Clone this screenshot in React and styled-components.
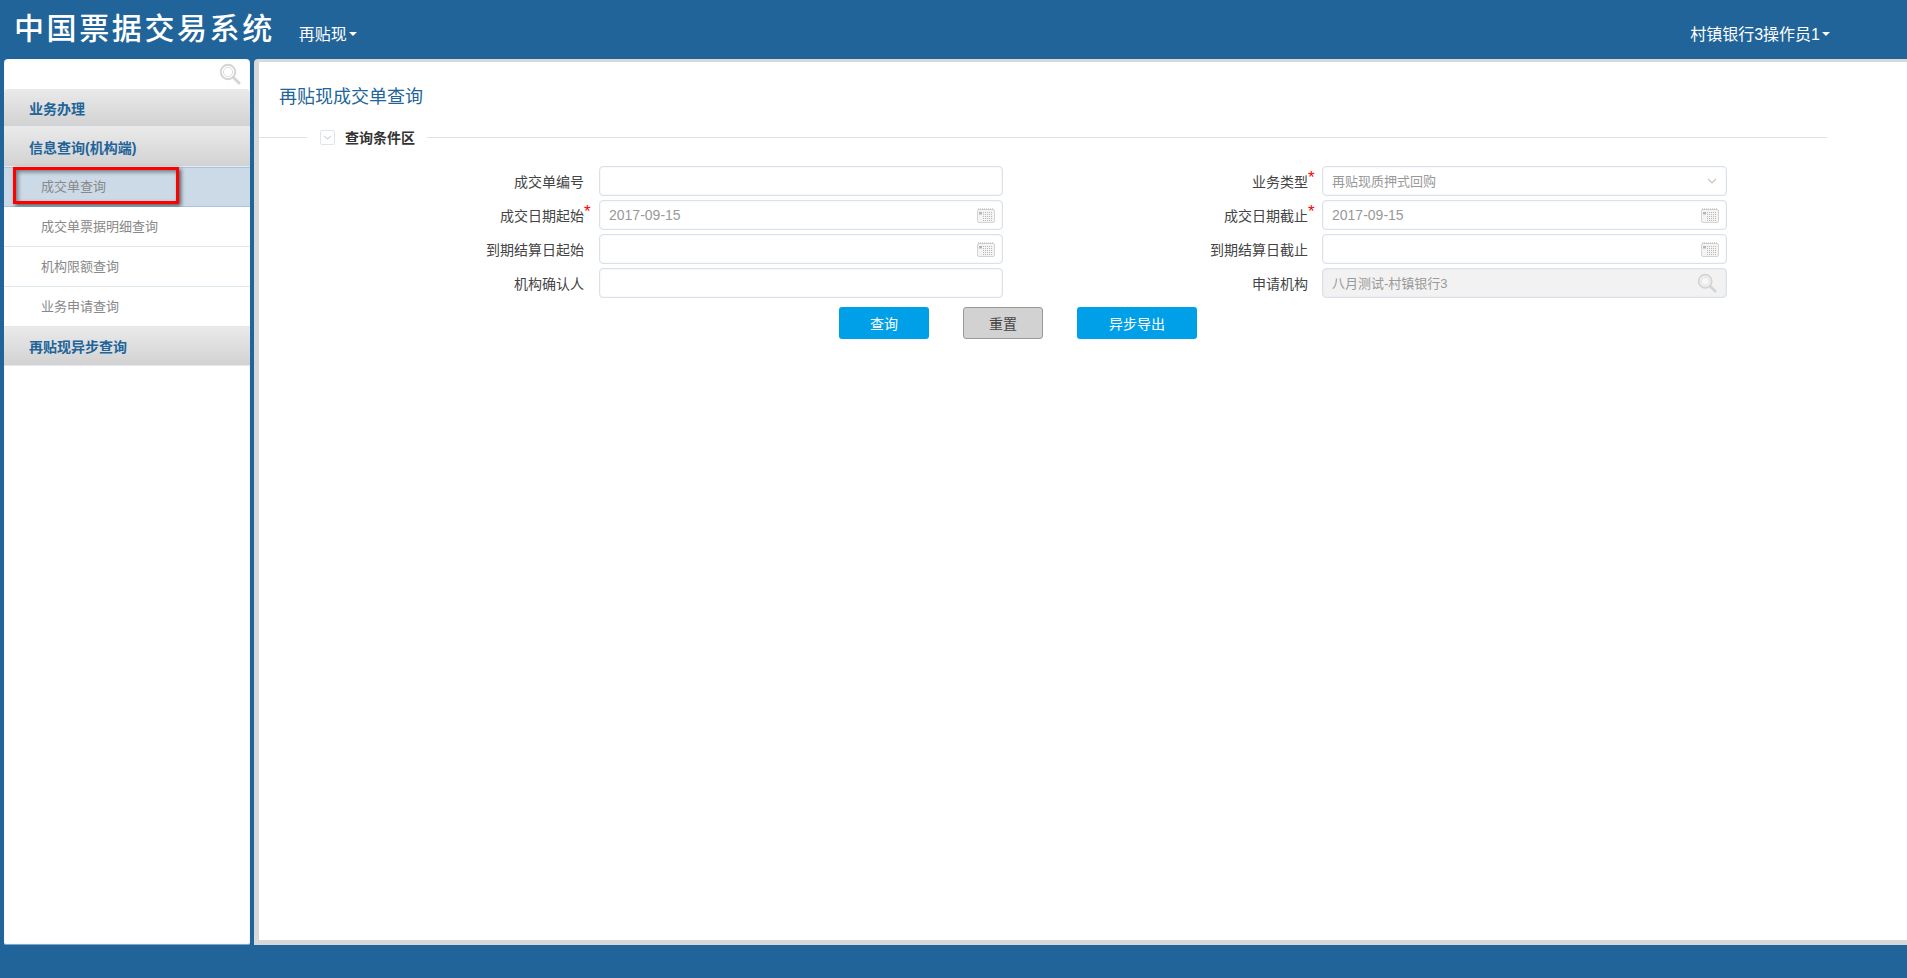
import React from "react";
import styled, { createGlobalStyle } from "styled-components";

const FONT = `"Liberation Sans", "Noto Sans CJK SC", sans-serif`;
const BLUE = "#216499";

const Global = createGlobalStyle`
  html, body { margin: 0; padding: 0; height: 100%; background: ${BLUE}; overflow: hidden; }
  * { box-sizing: border-box; }
`;

const Page = styled.div`
  width: 1907px;
  height: 978px;
  display: flex;
  flex-direction: column;
  background: ${BLUE};
  font-family: ${FONT};
`;

const Header = styled.header`
  height: 59px;
  flex: none;
  display: flex;
  align-items: center;
  padding: 0 77px 0 14px;
  color: #fff;
`;

const Logo = styled.div`
  font-size: 30px;
  line-height: 59px;
  font-weight: 500;
  letter-spacing: 2.6px;
  margin-top: -3px;
  white-space: nowrap;
`;

const NavLink = styled.div`
  display: flex;
  align-items: center;
  font-size: 16px;
  margin-top: ${(p) => p.$top}px;
  white-space: nowrap;
  margin-left: ${(p) => p.$left || 0}px;
`;

const Caret = styled.span`
  display: inline-block;
  width: 0;
  height: 0;
  margin-left: 2px;
  margin-top: 2px;
  border-left: 4px solid transparent;
  border-right: 4px solid transparent;
  border-top: 4px solid #fff;
`;

const Spacer = styled.div`
  flex: 1;
`;

const Body = styled.div`
  flex: none;
  height: 886px;
  display: flex;
  gap: 4px;
  padding-left: 4px;
`;

const Sidebar = styled.aside`
  width: 246px;
  flex: none;
  background: #fff;
  border-radius: 4px 4px 2px 2px;
  border-bottom: 1px solid #7fa6c6;
  box-shadow: inset 0 0 2px rgba(0, 0, 0, 0.12);
  display: flex;
  flex-direction: column;
`;

const SearchRow = styled.div`
  height: 30px;
  flex: none;
  display: flex;
  align-items: center;
  justify-content: flex-end;
  padding-right: 9px;
`;

const MenuHead = styled.div`
  height: ${(p) => p.$h}px;
  flex: none;
  display: flex;
  align-items: center;
  padding-left: 25px;
  font-size: 14px;
  font-weight: 700;
  color: ${BLUE};
  background: linear-gradient(#eaeaea, #d2d2d2);
  border-radius: ${(p) => (p.$first ? "4px 4px 0 0" : "0")};
  border-bottom: 1px solid #e4e9ef;
`;

const MenuItem = styled.div`
  position: relative;
  height: 40px;
  flex: none;
  display: flex;
  align-items: center;
  padding: 0 0 ${(p) => (p.$active ? 3 : 2)}px 37px;
  font-size: 13px;
  color: #888;
  background: ${(p) => (p.$active ? "#ccdae7" : "#fff")};
  border-top: ${(p) => (p.$active ? "1px solid #a9c4dd" : "none")};
  border-bottom: 1px solid ${(p) => (p.$active ? "#a9c4dd" : "#dfe7ef")};
`;

const Highlight = styled.div`
  position: absolute;
  left: 9px;
  top: -1px;
  width: 166px;
  height: 37px;
  border: 3px solid #f00;
  box-shadow: 2px 2px 4px rgba(0, 0, 0, 0.6), inset 2px 2px 4px rgba(0, 0, 0, 0.45);
`;

const Main = styled.main`
  flex: 1;
  background: #fff;
  border-style: solid;
  border-color: #d8d8d8;
  border-width: 3px 0 5px 5px;
  border-radius: 4px 0 0 0;
  display: flex;
  flex-direction: column;
`;

const PageTitle = styled.h1`
  margin: 0;
  padding: 23px 0 0 20px;
  font-size: 18px;
  line-height: 24px;
  font-weight: 400;
  color: ${BLUE};
`;

const Legend = styled.div`
  margin-top: 16px;
  width: 1568px;
  height: 24px;
  display: flex;
  align-items: center;
`;

const Rule = styled.div`
  height: 1px;
  background: #dfe1e6;
  flex: 1;
`;

const LegendStart = styled.div`
  width: 48px;
  height: 1px;
  flex: none;
  margin-right: 13px;
  background: #dfe1e6;
`;

const LegendText = styled.span`
  font-size: 14px;
  font-weight: 700;
  color: #333;
  margin: 0 12px 0 10px;
  white-space: nowrap;
`;

const FormGrid = styled.div`
  margin-top: 17px;
  display: grid;
  grid-template-columns: 340px 404px 319px 405px;
  grid-auto-rows: 30px;
  row-gap: 4px;
`;

const Label = styled.label`
  position: relative;
  align-self: center;
  justify-self: end;
  margin-right: ${(p) => (p.$right ? 14 : 15)}px;
  font-size: 14px;
  line-height: 18px;
  color: #444;
  margin-top: 1px;
  white-space: nowrap;
`;

const Star = styled.span`
  position: absolute;
  left: 100%;
  top: -3px;
  font-size: 17px;
  line-height: 16px;
  color: #f00;
`;

const Field = styled.div`
  height: 30px;
  display: flex;
  align-items: center;
  justify-content: space-between;
  padding: 0 ${(p) => (p.$wide ? 9 : 7)}px 0 9px;
  border: 1px solid #dbe1ea;
  border-radius: 4px;
  box-shadow: inset 0 0 2px rgba(180, 190, 205, 0.35);
  background: ${(p) => (p.$disabled ? "#f2f2f2" : "#fff")};
`;

const FieldText = styled.span`
  font-size: ${(p) => (p.$date ? 14 : 13)}px;
  margin-bottom: ${(p) => (p.$date ? 0 : 2)}px;
  color: #999;
  white-space: nowrap;
`;

const Actions = styled.div`
  margin-top: 9px;
  margin-left: 580px;
  display: flex;
`;

const Btn = styled.button`
  width: ${(p) => p.$w}px;
  height: 32px;
  margin-right: ${(p) => p.$mr || 0}px;
  padding: 0;
  border-radius: 3px;
  font-family: ${FONT};
  font-size: 14px;
  background: ${(p) => (p.$gray ? "#d2d2d2" : "#00a0e9")};
  color: ${(p) => (p.$gray ? "#444" : "#fff")};
  border: ${(p) => (p.$gray ? "1px solid #999" : "none")};
`;

const Footer = styled.footer`
  flex: 1;
  background: ${BLUE};
`;

const SearchIcon = ({ size = 22, color = "#d4d4d4" }) => (
  <svg width={size} height={size} viewBox="0 0 22 22" fill="none">
    <circle cx="9" cy="9" r="7.2" stroke={color} strokeWidth="2" fill="#fff" fillOpacity="0.4" />
    <circle cx="9" cy="9" r="4.6" stroke={color} strokeWidth="0.8" />
    <path d="M14.5 14.5L20 20" stroke={color} strokeWidth="3" strokeLinecap="round" />
  </svg>
);

const CalendarIcon = () => (
  <svg width="18" height="15" viewBox="0 0 18 15">
    <rect x="0.5" y="1.5" width="17" height="13" rx="1.5" fill="#f4f4f4" stroke="#d4d4d4" />
    <path d="M1 1h16" stroke="#b5b5b5" strokeDasharray="1 1" />
    <rect x="2" y="4" width="3" height="2.5" fill="#b5b5b5" />
    <path d="M6 4.5h10M6 6.5h10M6 8.5h10M6 10.5h10M6 12.5h10" stroke="#b8b8b8" strokeDasharray="1 1" />
  </svg>
);

const ChevronIcon = () => (
  <svg width="10" height="6" viewBox="0 0 10 6" fill="none">
    <path d="M1 1l4 4 4-4" stroke="#c4c4c4" strokeWidth="1.2" />
  </svg>
);

const CheckIcon = () => (
  <svg width="15" height="15" viewBox="0 0 15 15" fill="none">
    <rect x="0.5" y="0.5" width="14" height="14" rx="1.5" fill="#fff" stroke="#dfe5ee" />
    <path d="M4 6l3.5 3L11 6" stroke="#cfd8e4" strokeWidth="1.1" />
  </svg>
);

const Row = ({ label, star, right, children, disabled, wide }) => (
  <>
    <Label $right={right}>
      {label}
      {star && <Star>*</Star>}
    </Label>
    <Field $disabled={disabled} $wide={wide}>{children}</Field>
  </>
);

export default function App() {
  return (
    <Page>
      <Global />
      <Header>
        <Logo>中国票据交易系统</Logo>
        <NavLink $left={24} $top={7}>
          再贴现
          <Caret />
        </NavLink>
        <Spacer />
        <NavLink $top={6}>
          村镇银行3操作员1
          <Caret />
        </NavLink>
      </Header>
      <Body>
        <Sidebar>
          <SearchRow>
            <SearchIcon />
          </SearchRow>
          <MenuHead $h={38} $first>业务办理</MenuHead>
          <MenuHead $h={40}>信息查询(机构端)</MenuHead>
          <MenuItem $active>
            成交单查询
            <Highlight />
          </MenuItem>
          <MenuItem>成交单票据明细查询</MenuItem>
          <MenuItem>机构限额查询</MenuItem>
          <MenuItem>业务申请查询</MenuItem>
          <MenuHead $h={39}>再贴现异步查询</MenuHead>
        </Sidebar>
        <Main>
          <PageTitle>再贴现成交单查询</PageTitle>
          <Legend>
            <LegendStart />
            <CheckIcon />
            <LegendText>查询条件区</LegendText>
            <Rule />
          </Legend>
          <FormGrid>
            <Row label="成交单编号" />
            <Row label="业务类型" star right wide>
              <FieldText>再贴现质押式回购</FieldText>
              <ChevronIcon />
            </Row>
            <Row label="成交日期起始" star>
              <FieldText $date>2017-09-15</FieldText>
              <CalendarIcon />
            </Row>
            <Row label="成交日期截止" star right>
              <FieldText $date>2017-09-15</FieldText>
              <CalendarIcon />
            </Row>
            <Row label="到期结算日起始">
              <span />
              <CalendarIcon />
            </Row>
            <Row label="到期结算日截止" right>
              <span />
              <CalendarIcon />
            </Row>
            <Row label="机构确认人" />
            <Row label="申请机构" right disabled wide>
              <FieldText>八月测试-村镇银行3</FieldText>
              <SearchIcon size={20} />
            </Row>
          </FormGrid>
          <Actions>
            <Btn $w={90} $mr={34}>查询</Btn>
            <Btn $w={80} $mr={34} $gray>重置</Btn>
            <Btn $w={120}>异步导出</Btn>
          </Actions>
        </Main>
      </Body>
      <Footer />
    </Page>
  );
}
